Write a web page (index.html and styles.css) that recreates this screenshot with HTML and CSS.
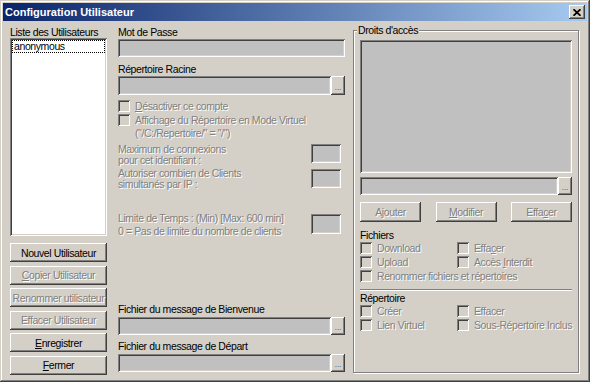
FILE: index.html
```html
<!DOCTYPE html>
<html>
<head>
  <meta charset="UTF-8">
  <title>Configuration Utilisateur</title>
  <link rel="stylesheet" href="styles.css">
</head>
<body>
<div class="window">
  <div class="titlebar">
    <span class="title">Configuration Utilisateur</span>
    <span class="close"><svg width="8" height="7" viewBox="0 0 8 7"><path d="M0.5 0.2 L7.5 6.8 M7.5 0.2 L0.5 6.8" stroke="#000" stroke-width="1.7"/></svg></span>
  </div>

  <div class="content">
    <!-- users -->
    <div class="col-users">
      <div class="lbl">Liste des Utilisateurs</div>
      <div class="userlist"><div class="item">anonymous</div></div>
      <div class="btns">
        <div class="btn">Nouvel Utilisateur</div>
        <div class="btn off"><u>C</u>opier Utilisateur</div>
        <div class="btn off">Renommer utilisateur</div>
        <div class="btn off">Effacer Utilisateur</div>
        <div class="btn"><u>E</u>nregistrer</div>
        <div class="btn"><u>F</u>ermer</div>
      </div>
    </div>

    <!-- account settings -->
    <div class="col-main">
      <div class="lbl">Mot de Passe</div>
      <div class="field pass"></div>
      <div class="lbl sp6">Répertoire Racine</div>
      <div class="browse"><div class="field"></div><div class="dots">...</div></div>

      <div class="check first"><span class="box"></span><span class="dis"><u>D</u>ésactiver ce compte</span></div>
      <div class="check"><span class="box"></span><span class="dis">Affichage du Répertoire en Mode Virtuel</span></div>
      <div class="note dis">("/C:/Repertoire/" = "/")</div>

      <div class="limit l1">
        <div class="dis">Maximum de connexions<br>pour cet identifiant :</div>
        <div class="field small"></div>
      </div>
      <div class="limit l2">
        <div class="dis">Autoriser combien de Clients<br>simultanés par IP :</div>
        <div class="field small"></div>
      </div>
      <div class="limit l3">
        <div class="dis">Limite de Temps : (Min) [Max: 600 min]<br>0 = Pas de limite du nombre de clients</div>
        <div class="field small"></div>
      </div>

      <div class="lbl msg1">Fichier du message de Bienvenue</div>
      <div class="browse low"><div class="field"></div><div class="dots">...</div></div>
      <div class="lbl msg2">Fichier du message de Départ</div>
      <div class="browse low"><div class="field"></div><div class="dots">...</div></div>
    </div>

    <!-- rights -->
    <div class="group">
      <span class="legend">Droits d'accès</span>
      <div class="field rights"></div>
      <div class="browse path"><div class="field"></div><div class="dots">...</div></div>
      <div class="actions">
        <div class="btn off">A<u>j</u>outer</div>
        <div class="btn off"><u>M</u>odifier</div>
        <div class="btn off">Effa<u>c</u>er</div>
      </div>

      <div class="sect">Fichiers</div>
      <div class="grid">
        <div class="check"><span class="box"></span><span class="dis">Download</span></div>
        <div class="check"><span class="box"></span><span class="dis">Effa<u>c</u>er</span></div>
        <div class="check"><span class="box"></span><span class="dis">Upload</span></div>
        <div class="check"><span class="box"></span><span class="dis">Accès <u>I</u>nterdit</span></div>
        <div class="check wide"><span class="box"></span><span class="dis">Renommer fichiers et répertoires</span></div>
      </div>

      <div class="sep"></div>
      <div class="sect top2">Répertoire</div>
      <div class="grid">
        <div class="check"><span class="box"></span><span class="dis">Créer</span></div>
        <div class="check"><span class="box"></span><span class="dis">Effacer</span></div>
        <div class="check"><span class="box"></span><span class="dis">Lien Virtuel</span></div>
        <div class="check"><span class="box"></span><span class="dis">Sous-Répertoire Inclus</span></div>
      </div>
    </div>
  </div>
</div>
</body>
</html>
```

FILE: styles.css
```css
* { box-sizing: border-box; }

body {
  margin: 0;
  background-color: #d4d0c8;
  font-family: "Liberation Sans", Arial, sans-serif;
  font-size: 10.5px;
  letter-spacing: -0.4px;
  color: #000;
}

.window {
  width: 590px;
  height: 382px;
  padding: 3px;
  background-color: #d4d0c8;
  box-shadow: inset -1px -1px 0 #404040, inset 1px 1px 0 #d4d0c8,
              inset -2px -2px 0 #808080, inset 2px 2px 0 #fff;
}

/* title bar */
.titlebar {
  height: 18px;
  display: flex;
  align-items: center;
  justify-content: space-between;
  padding: 0 2px;
  background: linear-gradient(to right, #0a246a, #a6caf0);
}
.title {
  color: #fff;
  font-weight: bold;
  font-size: 11px;
  letter-spacing: 0;
}
.close {
  width: 16px;
  height: 14px;
  display: flex;
  align-items: center;
  justify-content: center;
  background-color: #d4d0c8;
  box-shadow: inset -1px -1px 0 #404040, inset 1px 1px 0 #fff,
              inset -2px -2px 0 #808080;
}

.content {
  display: flex;
  padding: 5px 8px 0 7px;
}

.lbl { line-height: 13px; white-space: nowrap; }
.dis { color: #808080; text-shadow: 1px 1px 0 #fff; }
u { text-decoration: underline; }

/* sunken edit look */
.field {
  background-color: #c0c0c0;
  box-shadow: inset 1px 1px 0 #808080, inset -1px -1px 0 #fff,
              inset 2px 2px 0 #404040, inset -2px -2px 0 #d4d0c8;
}

.btn {
  height: 19px;
  display: flex;
  align-items: center;
  justify-content: center;
  white-space: nowrap;
  background-color: #d4d0c8;
  box-shadow: inset -1px -1px 0 #404040, inset 1px 1px 0 #fff,
              inset -2px -2px 0 #808080;
}
.btn.off { color: #808080; text-shadow: 1px 1px 0 #fff; }

/* left column */
.col-users { width: 97px; display: flex; flex-direction: column; }
.userlist {
  height: 198px;
  margin-top: -1px;
  padding: 2px;
  background-color: #fff;
  box-shadow: inset 1px 1px 0 #808080, inset -1px -1px 0 #fff,
              inset 2px 2px 0 #404040, inset -2px -2px 0 #d4d0c8;
}
.item {
  height: 13px;
  line-height: 11px;
  padding-left: 1px;
  border: 1px dotted #000;
}
.btns {
  margin-top: 7px;
  display: flex;
  flex-direction: column;
  gap: 3.6px;
}

/* middle column */
.col-main { width: 227px; margin-left: 11px; display: flex; flex-direction: column; }
.field.pass { height: 18px; }
.sp6 { margin-top: 6px; }

.browse { display: flex; height: 19px; }
.browse .field { flex: 1; }
.browse.low { height: 18px; }
.dots {
  width: 14px;
  display: flex;
  align-items: flex-end;
  justify-content: center;
  padding-bottom: 4px;
  font-size: 8px;
  letter-spacing: 0;
  line-height: 6px;
  color: #404040;
  background-color: #d4d0c8;
  box-shadow: inset -1px -1px 0 #404040, inset 1px 1px 0 #fff,
              inset -2px -2px 0 #808080;
}

.check {
  height: 14px;
  display: flex;
  align-items: center;
  gap: 5px;
  white-space: nowrap;
}
.check.first { margin-top: 4px; }
.box {
  width: 12px;
  height: 12px;
  flex: none;
  background-color: #d4d0c8;
  box-shadow: inset 1px 1px 0 #808080, inset -1px -1px 0 #fff,
              inset 2px 2px 0 #404040, inset -2px -2px 0 #d4d0c8;
}
.note { line-height: 13px; padding-left: 17px; }

.limit {
  display: flex;
  justify-content: space-between;
  align-items: flex-start;
  padding-right: 4px;
  line-height: 11px;
}
.limit .field.small { width: 30px; height: 19px; }
.l1 { margin-top: 4px; }
.l2 { margin-top: 2px; }
.l2 .field.small { margin-top: 1px; }
.l3 { margin-top: 22px; line-height: 13px; }
.l3 .field.small { margin-top: 2px; height: 20px; }

.msg1 { margin-top: 65px; margin-bottom: 1px; }
.msg2 { margin-top: 5px; margin-bottom: 1px; }

/* rights group */
.group {
  position: relative;
  width: 226px;
  height: 343px;
  margin: 4px 0 0 8px;
  padding: 9px 6px 0 6px;
  border: 1px solid #808080;
  box-shadow: inset 1px 1px 0 #fff, 1px 1px 0 #fff;
}
.legend {
  position: absolute;
  top: -7px;
  left: 3px;
  padding: 0 1px;
  line-height: 13px;
  background-color: #d4d0c8;
}
.field.rights { height: 133px; }
.browse.path { margin-top: 4px; height: 18px; }
.actions {
  margin-top: 7px;
  display: flex;
  justify-content: space-between;
}
.actions .btn { width: 61px; height: 20px; }

.sect { margin-top: 7px; line-height: 12px; }
.sect.top2 { margin-top: 1px; }
.grid {
  display: grid;
  grid-template-columns: 97px auto;
}
.grid .wide { grid-column: 1 / 3; }
.sep {
  margin-top: 6px;
  border-top: 1px solid #808080;
  border-bottom: 1px solid #fff;
}
```
